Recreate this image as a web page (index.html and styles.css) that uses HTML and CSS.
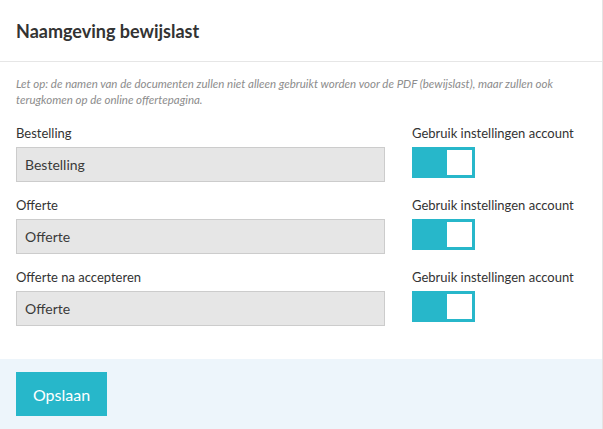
FILE: index.html
```html
<!DOCTYPE html>
<html lang="nl">
<head>
<meta charset="utf-8">
<title>Naamgeving bewijslast</title>
<link rel="stylesheet" href="styles.css">
</head>
<body>
<div class="card">
  <div class="card-header">
    <h2 class="card-title">Naamgeving bewijslast</h2>
  </div>
  <div class="card-body">
    <p class="note">Let op: de namen van de documenten zullen niet alleen gebruikt worden voor de PDF (bewijslast), maar zullen ook terugkomen op de online offertepagina.</p>

    <div class="row">
      <div class="field">
        <label class="label">Bestelling</label>
        <div class="input">Bestelling</div>
      </div>
      <div class="field">
        <label class="label">Gebruik instellingen account</label>
        <div class="toggle"><span class="knob"></span></div>
      </div>
    </div>

    <div class="row">
      <div class="field">
        <label class="label">Offerte</label>
        <div class="input">Offerte</div>
      </div>
      <div class="field">
        <label class="label">Gebruik instellingen account</label>
        <div class="toggle"><span class="knob"></span></div>
      </div>
    </div>

    <div class="row">
      <div class="field">
        <label class="label">Offerte na accepteren</label>
        <div class="input">Offerte</div>
      </div>
      <div class="field">
        <label class="label">Gebruik instellingen account</label>
        <div class="toggle"><span class="knob"></span></div>
      </div>
    </div>
  </div>
  <div class="card-footer">
    <button class="btn">Opslaan</button>
  </div>
</div>
</body>
</html>
```

FILE: styles.css
```css
* { box-sizing: border-box; }

html, body {
  margin: 0;
  padding: 0;
  background: #ffffff;
  font-family: Lato, "Open Sans", "Liberation Sans", sans-serif;
  color: #333333;
}

.card {
  width: 603px;
  border-right: 1px solid #e4e4e4;
  background: #ffffff;
}

.card-header {
  height: 62px;
  padding: 0 16px;
  display: flex;
  align-items: center;
  border-bottom: 1px solid #e6e6e6;
}

.card-title {
  margin: 0;
  font-size: 18px;
  font-weight: 700;
  color: #333333;
  line-height: 20px;
}

.card-body {
  padding: 14px 16px 18px;
}

.note {
  margin: 0 0 17px;
  font-size: 11.5px;
  font-style: italic;
  line-height: 16px;
  color: #8c8c8c;
  font-weight: 400;
}

.row {
  display: grid;
  grid-template-columns: 369px auto;
  column-gap: 27px;
  margin-bottom: 15px;
}

.field {
  display: flex;
  flex-direction: column;
  align-items: flex-start;
}

.label {
  display: block;
  font-size: 13px;
  line-height: 17px;
  margin-bottom: 5px;
  color: #333333;
}

.input {
  width: 100%;
  height: 35px;
  background: #e6e6e6;
  border: 1px solid #cccccc;
  padding: 0 8px;
  display: flex;
  align-items: center;
  font-size: 14px;
  color: #3a3a3a;
}

.toggle {
  width: 63px;
  height: 31px;
  background: #27b7ca;
  padding: 3px;
  display: flex;
  justify-content: flex-end;
}

.knob {
  width: 25px;
  height: 25px;
  background: #ffffff;
}

.card-footer {
  background: #edf5fb;
  padding: 13px 16px;
}

.btn {
  display: block;
  width: 91px;
  height: 44px;
  border: 0;
  margin: 0;
  background: #27b7ca;
  color: #ffffff;
  font-family: Lato, "Open Sans", "Liberation Sans", sans-serif;
  font-size: 16px;
  padding: 0;
}
```
